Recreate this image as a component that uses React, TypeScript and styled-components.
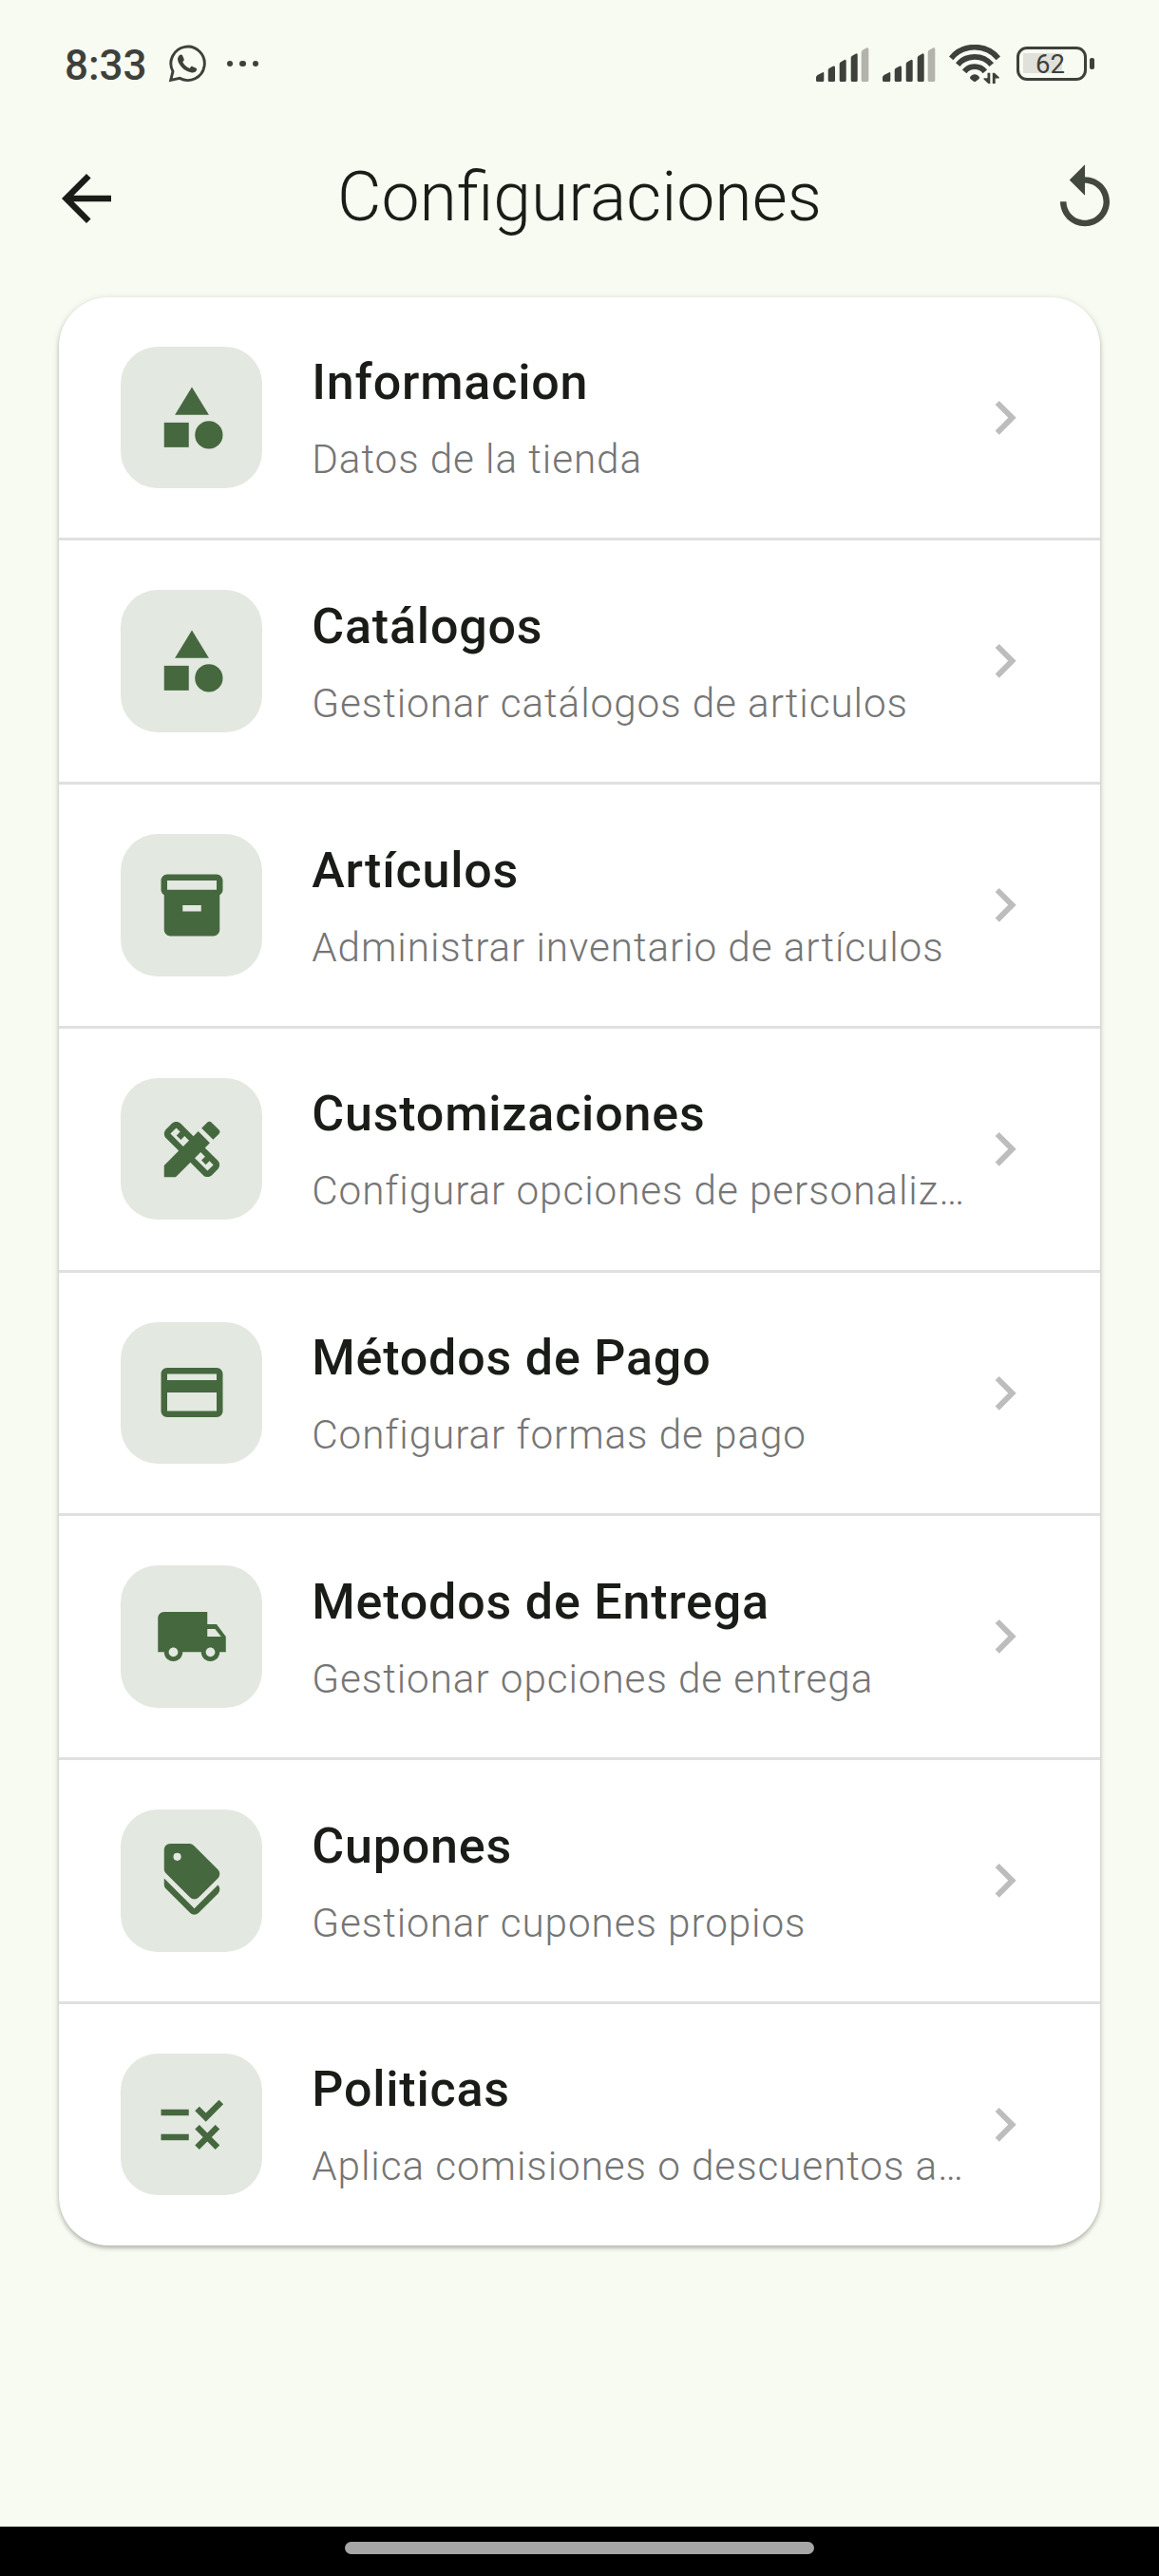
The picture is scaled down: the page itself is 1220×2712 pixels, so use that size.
import React from "react";
import styled, { createGlobalStyle } from "styled-components";
import {
  MdArrowBack,
  MdCategory,
  MdChevronRight,
  MdDesignServices,
  MdDiscount,
  MdInventory2,
  MdLocalShipping,
  MdOutlinePayment,
  MdReplay,
  MdRule,
} from "react-icons/md";
import type { IconType } from "react-icons";

const GlobalStyle = createGlobalStyle`
  *, *::before, *::after { box-sizing: border-box; }
  body {
    margin: 0;
    background: #f8fbf1;
    font-family: Roboto, "Liberation Sans", sans-serif;
  }
`;

const Screen = styled.div`
  display: flex;
  flex-direction: column;
  width: 1220px;
  height: 2712px;
  background: #f8fbf1;
  overflow: hidden;
`;

const StatusBar = styled.header`
  display: flex;
  align-items: center;
  justify-content: space-between;
  height: 127px;
  padding: 7px 68px 0 68px;
  color: #3e403b;
`;

const StatusGroup = styled.div`
  display: flex;
  align-items: center;
`;

const Clock = styled.span`
  width: 109px;
  padding-top: 4px;
  font-size: 44px;
  font-weight: 500;
  line-height: 54px;
`;

const AppBar = styled.div`
  display: grid;
  grid-template-columns: 91px 1fr 91px;
  align-items: center;
  justify-items: end;
  height: 164px;
  padding: 0 39px;
`;

const IconButton = styled.button<{ $tone: string }>`
  display: flex;
  padding: 0;
  border: 0;
  background: none;
  color: ${(p) => p.$tone};
  font-size: 78px;
`;

const PageTitle = styled.h1`
  justify-self: center;
  margin: 0;
  padding-bottom: 4px;
  color: #1a1c18;
  font-size: 71.5px;
  font-weight: 300;
  line-height: 91px;
`;

const Card = styled.ul`
  margin: 21.8px 61.75px 0;
  padding: 0;
  list-style: none;
  background: #fff;
  border-radius: 52px;
  box-shadow: 0 3px 4px rgba(0, 0, 0, 0.2), 0 1px 7px rgba(0, 0, 0, 0.13);
`;

const Row = styled.li`
  display: flex;
  align-items: center;
  height: 253.5px;
  padding: 0 65px;

  & + & {
    height: 256.75px;
    border-top: 3.25px solid #e0e0e0;
  }
`;

const IconTile = styled.div`
  display: flex;
  flex: none;
  align-items: center;
  justify-content: center;
  width: 149.5px;
  height: 149.5px;
  border-radius: 39px;
  background: #e3e8e1;
  color: #46683f;
  font-size: 78px;
`;

const Labels = styled.div`
  flex: 1;
  min-width: 0;
  margin-left: 52px;
  padding-top: 0.6px;
`;

const Label = styled.div`
  color: #1a1c18;
  font-size: 52px;
  font-weight: 500;
  line-height: 76px;
  letter-spacing: 0.8125px;
`;

const Hint = styled.div`
  margin-top: 13px;
  overflow: hidden;
  color: #757575;
  font-size: 42.25px;
  font-weight: 300;
  line-height: 60px;
  letter-spacing: 0.92px;
  white-space: nowrap;
  text-overflow: ellipsis;
`;

const Chevron = styled(MdChevronRight)`
  flex: none;
  color: #bdbdbd;
  font-size: 71.5px;
`;

const Spacer = styled.div`
  flex: 1;
`;

const NavigationBar = styled.footer`
  display: flex;
  justify-content: center;
  height: 52px;
  padding-top: 16px;
  background: #000;
`;

const HomeHandle = styled.div`
  width: 494px;
  height: 13px;
  border-radius: 6.5px;
  background: #a6a6a6;
`;

const WhatsAppGlyph = () => (
  <svg width="40" height="40" viewBox="0 0 40 40" fill="none">
    <path
      d="M2.700 37.400 5 28.200A17.700 17.700 0 1 1 12.200 35.400Z"
      stroke="currentColor"
      strokeWidth="2.900"
    />
    <path
      d="M11.800 11.200c.9-.9 2.700-1 3.200.1l1.700 4c.3.900-.1 1.500-1.400 3 1.600 3.100 4 5.200 7.300 6.600 1.500-2 2-2.400 2.900-2l4 1.900c.8.400.8 1.500.3 2.400-1.100 2-3.600 2.500-5.800 2-7-1.600-11.800-6.500-13.500-11.400-.9-2.500-.5-4.900 1.300-6.600Z"
      fill="currentColor"
    />
  </svg>
);

const MoreDots = styled.span`
  display: flex;
  gap: 7.2px;
  margin-left: 22px;

  i {
    width: 6.2px;
    height: 6.2px;
    border-radius: 50%;
    background: currentColor;
  }
`;

const SignalGlyph = () => (
  <svg width="56" height="36" viewBox="0 0 56 36" fill="currentColor">
    <path d="M0 31.500Q0 30 1.500 29L6.500 26.400Q8.300 25.500 8.300 27.500V34.500a1.500 1.500 0 0 1-1.500 1.500h-5.300A1.500 1.500 0 0 1 0 34.500Z" />
    <path d="M12.700 24Q12.700 22.500 14 21.800L18.300 19.600Q20 19 20 21V34.500a1.500 1.500 0 0 1-1.500 1.500h-4.300a1.500 1.500 0 0 1-1.500-1.500Z" />
    <path d="M24.700 17.500Q24.700 16 26 15.200L30 12.900Q31.700 12.300 31.700 14.300V34.500a1.500 1.500 0 0 1-1.500 1.500h-4a1.500 1.500 0 0 1-1.500-1.500Z" />
    <path d="M36.700 11Q36.700 9.500 38 8.700L42 6.500Q43.700 5.900 43.700 7.900V34.500a1.500 1.500 0 0 1-1.500 1.500h-4a1.500 1.500 0 0 1-1.500-1.500Z" />
    <path
      d="M47.700 5.200Q47.700 3.600 49 2.800L53.500.3Q55.300-.3 55.300 1.700V34.500a1.500 1.500 0 0 1-1.500 1.500h-4.600a1.500 1.500 0 0 1-1.500-1.500Z"
      opacity="0.38"
    />
  </svg>
);

const WifiGlyph = () => (
  <svg width="54" height="42" viewBox="0 0 54 42" fill="none" stroke="currentColor">
    <path d="M2.200 14.300A32.300 32.300 0 0 1 51.800 14.300" strokeWidth="5.800" />
    <path d="M9.200 21.200A23.200 23.200 0 0 1 44.800 21.200" strokeWidth="5.800" />
    <path d="M16.200 28.400A13.800 13.800 0 0 1 37.800 28.400" strokeWidth="5.800" />
    <path
      d="M22 34.200C24.500 30.300 29.500 30.300 32 34.200Q32.300 35.500 31 36.400L28 38.800Q27 39.400 26 38.800L23 36.400Q21.700 35.500 22 34.200Z"
      fill="currentColor"
      stroke="none"
    />
    <path
      d="M43.300 29.800V41H41.300L36.500 36.600V35.200H40.500V29.800ZM45.800 41V29.800H47.800L52.700 34.200V35.600H48.700V41Z"
      fill="currentColor"
      stroke="none"
    />
  </svg>
);

const SignalSlot = styled.span`
  display: flex;
  width: 70px;
`;

const NetworkIcons = styled.span`
  display: flex;
  align-items: center;
  padding-top: 2px;
`;

const Battery = styled.div`
  display: flex;
  align-items: center;
  gap: 3px;
  margin-left: 17px;

  &::after {
    content: "";
    width: 5px;
    height: 12px;
    border-radius: 2px;
    background: currentColor;
  }
`;

const BatteryBody = styled.div`
  display: flex;
  align-items: center;
  justify-content: center;
  width: 74px;
  height: 36px;
  padding: 1px 3px 0 0;
  border: 3.5px solid currentColor;
  border-radius: 11px;
  background: linear-gradient(#dfe1da, #dfe1da) 4px 4px / 41px 21px no-repeat;
  font-size: 27.5px;
  line-height: 28px;
`;

interface Setting {
  icon: IconType;
  label: string;
  hint: string;
}

const settings: Setting[] = [
  { icon: MdCategory, label: "Informacion", hint: "Datos de la tienda" },
  { icon: MdCategory, label: "Catálogos", hint: "Gestionar catálogos de articulos" },
  { icon: MdInventory2, label: "Artículos", hint: "Administrar inventario de artículos" },
  { icon: MdDesignServices, label: "Customizaciones", hint: "Configurar opciones de personaliz…" },
  { icon: MdOutlinePayment, label: "Métodos de Pago", hint: "Configurar formas de pago" },
  { icon: MdLocalShipping, label: "Metodos de Entrega", hint: "Gestionar opciones de entrega" },
  { icon: MdDiscount, label: "Cupones", hint: "Gestionar cupones propios" },
  { icon: MdRule, label: "Politicas", hint: "Aplica comisiones o descuentos a…" },
];

export default function App() {
  return (
    <>
      <GlobalStyle />
      <Screen>
        <StatusBar>
          <StatusGroup>
            <Clock>8:33</Clock>
            <WhatsAppGlyph />
            <MoreDots>
              <i />
              <i />
              <i />
            </MoreDots>
          </StatusGroup>
          <StatusGroup>
            <NetworkIcons>
              <SignalSlot>
                <SignalGlyph />
              </SignalSlot>
              <SignalSlot>
                <SignalGlyph />
              </SignalSlot>
              <WifiGlyph />
            </NetworkIcons>
            <Battery>
              <BatteryBody>62</BatteryBody>
            </Battery>
          </StatusGroup>
        </StatusBar>
        <AppBar>
          <IconButton $tone="#1a1c18" aria-label="Volver">
            <MdArrowBack />
          </IconButton>
          <PageTitle>Configuraciones</PageTitle>
          <IconButton $tone="#43483f" aria-label="Recargar">
            <MdReplay />
          </IconButton>
        </AppBar>
        <Card>
          {settings.map(({ icon: Icon, label, hint }) => (
            <Row key={label}>
              <IconTile>
                <Icon />
              </IconTile>
              <Labels>
                <Label>{label}</Label>
                <Hint>{hint}</Hint>
              </Labels>
              <Chevron />
            </Row>
          ))}
        </Card>
        <Spacer />
        <NavigationBar>
          <HomeHandle />
        </NavigationBar>
      </Screen>
    </>
  );
}
